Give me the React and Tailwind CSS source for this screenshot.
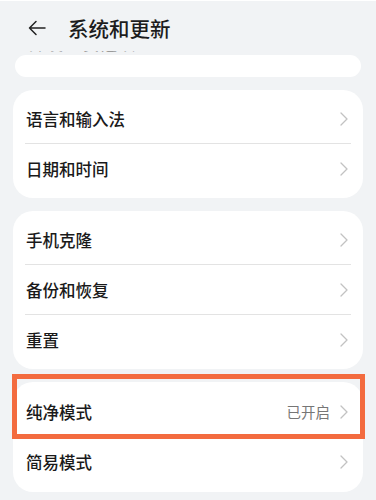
import React from "react";

const Chevron = () => (
  <svg width="8" height="14" viewBox="0 0 8 14" fill="none" className="shrink-0">
    <path d="M1 1l6 6-6 6" stroke="#c2c2c2" strokeWidth="1.3" strokeLinecap="round" strokeLinejoin="round" />
  </svg>
);

const Row = ({ label, value, last }) => (
  <div className="relative flex items-center h-[50px] pl-[13px] pr-[15px]">
    <span className="flex-1 text-[16.5px] font-medium text-[#1a1a1a]">{label}</span>
    {value && <span className="mr-[10px] text-[14.5px] text-[#767676]">{value}</span>}
    <Chevron />
    {!last && <div className="absolute bottom-0 left-[12px] right-[12px] h-px bg-[#e3e3e3]" />}
  </div>
);

const Card = ({ children, className = "" }) => (
  <div className={"mx-[13px] rounded-[20px] bg-white " + className}>{children}</div>
);

export default function App() {
  return (
    <div
      className="w-[376px] h-[500px] overflow-hidden bg-[#f1f3f5] border-t border-white"
      style={{ fontFamily: '"Noto Sans CJK SC", "Noto Sans", sans-serif' }}
    >
      <div className="flex items-center h-[54px] pl-[28px]">
        <svg width="18" height="16" viewBox="0 0 18 16" fill="none">
          <path d="M17 8H1.5M8 1.5L1.5 8 8 14.5" stroke="#222" strokeWidth="1.5" strokeLinecap="round" strokeLinejoin="round" />
        </svg>
        <span className="ml-[22px] text-[20.5px] font-medium text-[#1c1c1c]">系统和更新</span>
      </div>

      <div className="relative mx-[15px] h-[22px] rounded-[20px] bg-white">
        <div className="absolute -top-[4px] left-[14px] h-[4px] overflow-hidden">
          <div className="-mt-[19px] text-[16px] text-[#9a9a9a] leading-[22px] tracking-[2px]">开发人员选项</div>
        </div>
      </div>

      <Card className="mt-[13px] py-[4px]">
        <Row label="语言和输入法" />
        <Row label="日期和时间" last />
      </Card>

      <Card className="mt-[13px] py-[4px]">
        <Row label="手机克隆" />
        <Row label="备份和恢复" />
        <Row label="重置" last />
      </Card>

      <Card className="relative mt-[13px] py-[5px]">
        <Row label="纯净模式" value="已开启" />
        <Row label="简易模式" last />
        <div className="absolute -left-[1px] -right-[2px] -top-[8px] h-[65px] border-[5px] border-[#f36b3f]" />
      </Card>
    </div>
  );
}
